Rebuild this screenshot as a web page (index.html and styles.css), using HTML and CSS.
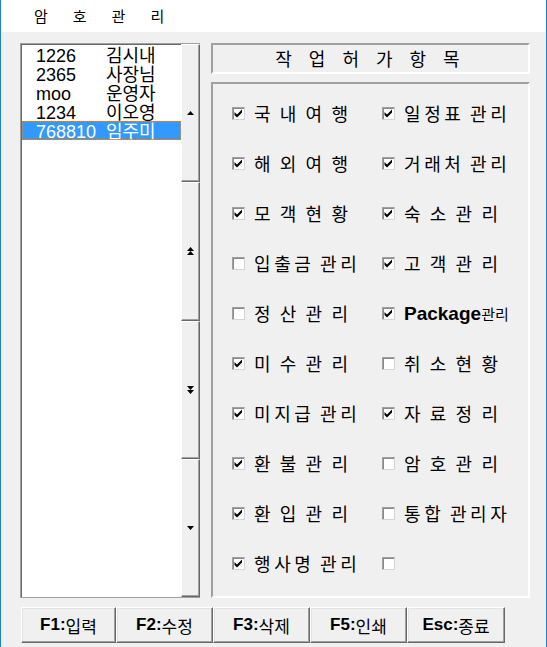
FILE: index.html
```html
<!DOCTYPE html>
<html lang="ko">
<head>
<meta charset="utf-8">
<title>암호관리</title>
<link rel="stylesheet" href="styles.css">
</head>
<body>
<div class="window">
  <div class="titlebar">암호관리</div>
  <div class="body">
    <div class="main">
      <div class="listbox">
        <div class="list">
          <div class="item"><span class="code">1226</span><span class="name">김시내</span></div>
          <div class="item"><span class="code">2365</span><span class="name">사장님</span></div>
          <div class="item"><span class="code">moo</span><span class="name">운영자</span></div>
          <div class="item"><span class="code">1234</span><span class="name">이오영</span></div>
          <div class="item selected"><span class="code">768810</span><span class="name">임주미</span></div>
        </div>
        <div class="scroll">
          <div class="sbtn"><svg width="7" height="4" viewBox="0 0 7 4"><polygon points="0,4 3.5,0 7,4" fill="#000"/></svg></div>
          <div class="sbtn"><svg width="7" height="8" viewBox="0 0 7 8"><polygon points="0,4 3.5,0 7,4" fill="#000"/><polygon points="0,8 3.5,4 7,8" fill="#000"/></svg></div>
          <div class="sbtn"><svg width="7" height="8" viewBox="0 0 7 8"><polygon points="0,0 3.5,4 7,0" fill="#000"/><polygon points="0,4 3.5,8 7,4" fill="#000"/></svg></div>
          <div class="sbtn"><svg width="7" height="4" viewBox="0 0 7 4"><polygon points="0,0 3.5,4 7,0" fill="#000"/></svg></div>
        </div>
      </div>
      <div class="right">
        <div class="header">작업허가항목</div>
        <div class="panel">
          <div class="grid">
            <div class="opt"><span class="cb on"></span><span class="lbl">국 내 여 행</span></div>
            <div class="opt"><span class="cb on"></span><span class="lbl cp">일정표 관리</span></div>
            <div class="opt"><span class="cb on"></span><span class="lbl">해 외 여 행</span></div>
            <div class="opt"><span class="cb on"></span><span class="lbl cp">거래처 관리</span></div>
            <div class="opt"><span class="cb on"></span><span class="lbl">모 객 현 황</span></div>
            <div class="opt"><span class="cb on"></span><span class="lbl">숙 소 관 리</span></div>
            <div class="opt"><span class="cb"></span><span class="lbl cp">입출금 관리</span></div>
            <div class="opt"><span class="cb on"></span><span class="lbl">고 객 관 리</span></div>
            <div class="opt"><span class="cb"></span><span class="lbl">정 산 관 리</span></div>
            <div class="opt"><span class="cb on"></span><span class="lbl"><b class="pkg">Package</b><span class="pkgk">관리</span></span></div>
            <div class="opt"><span class="cb on"></span><span class="lbl">미 수 관 리</span></div>
            <div class="opt"><span class="cb"></span><span class="lbl">취 소 현 황</span></div>
            <div class="opt"><span class="cb on"></span><span class="lbl cp">미지급 관리</span></div>
            <div class="opt"><span class="cb on"></span><span class="lbl">자 료 정 리</span></div>
            <div class="opt"><span class="cb on"></span><span class="lbl">환 불 관 리</span></div>
            <div class="opt"><span class="cb"></span><span class="lbl">암 호 관 리</span></div>
            <div class="opt"><span class="cb on"></span><span class="lbl">환 입 관 리</span></div>
            <div class="opt"><span class="cb"></span><span class="lbl cp">통합 관리자</span></div>
            <div class="opt"><span class="cb on"></span><span class="lbl cp">행사명 관리</span></div>
            <div class="opt"><span class="cb"></span><span class="lbl"></span></div>
          </div>
        </div>
      </div>
    </div>
    <div class="buttons">
      <div class="btn w95"><b>F1:</b>입력</div>
      <div class="btn w97"><b>F2:</b>수정</div>
      <div class="btn w97"><b>F3:</b>삭제</div>
      <div class="btn w97"><b>F5:</b>인쇄</div>
      <div class="btn w98"><b>Esc:</b>종료</div>
    </div>
  </div>
</div>
</body>
</html>
```
FILE: styles.css
```css
* { box-sizing: border-box; }
html, body { margin: 0; padding: 0; }
body {
  width: 547px;
  height: 647px;
  overflow: hidden;
  font-family: "Noto Sans CJK KR", "Liberation Sans", sans-serif;
  color: #000;
  background: #f0f0f0;
}
.window {
  width: 547px;
  height: 647px;
  border-left: 1px solid #1a82d6;
  border-right: 1px solid #1a82d6;
  background: #f0f0f0;
}
.titlebar {
  height: 32px;
  background: #fff;
  padding-left: 33px;
  font-size: 15px;
  line-height: 32px;
  letter-spacing: 25px;
}
.body {
  padding: 11px 0 0 19px;
}
.main {
  display: flex;
  gap: 11px;
  height: 555px;
}
.listbox {
  width: 180px;
  height: 555px;
  display: flex;
  border-top: 1px solid #a0a0a0;
  border-left: 1px solid #a0a0a0;
  border-bottom: 1px solid #a0a0a0;
}
.list {
  width: 160px;
  background: #fff;
  border-top: 1px solid #696969;
  border-left: 1px solid #696969;
}
.item {
  display: flex;
  height: 19px;
  line-height: 22px;
  padding-left: 14px;
  white-space: nowrap;
}
.code {
  width: 70px;
  font-family: "Liberation Sans", sans-serif;
  font-size: 18px;
}
.name {
  font-family: "Noto Sans CJK KR", sans-serif;
  font-size: 18px;
  line-height: 19px;
}
.item.selected {
  background: #3399ff;
  color: #fff;
  outline: 1px dotted #d88a3a;
  outline-offset: -1px;
}
.scroll {
  width: 19px;
  display: flex;
  flex-direction: column;
  background: #f0f0f0;
}
.sbtn {
  flex: 1;
  display: flex;
  align-items: center;
  justify-content: center;
  border-top: 1px solid #fff;
  border-left: 1px solid #fff;
  border-right: 1px solid #696969;
  border-bottom: 1px solid #696969;
  box-shadow: inset -1px -1px 0 #a0a0a0;
  padding-right: 1px;
}
.right {
  width: 319px;
  display: flex;
  flex-direction: column;
  gap: 8px;
}
.header {
  height: 31px;
  border: 2px solid;
  border-color: #a0a0a0 #fff #fff #a0a0a0;
  text-align: center;
  font-size: 18px;
  line-height: 27px;
  letter-spacing: 17px;
  padding-left: 11px;
}
.panel {
  height: 516px;
  border: 2px solid;
  border-color: #a0a0a0 #fff #fff #a0a0a0;
}
.grid {
  display: grid;
  grid-template-columns: 150px 150px;
  grid-auto-rows: 50px;
  padding: 4px 0 0 19px;
}
.opt {
  display: flex;
  align-items: center;
  white-space: nowrap;
}
.cb {
  width: 13px;
  height: 13px;
  flex: none;
  margin-right: 9px;
  background: #fff;
  border: 1px solid;
  border-color: #a0a0a0 #d4d4d4 #d4d4d4 #a0a0a0;
  box-shadow: inset 1px 1px 0 #8a8a8a;
}
.cb.on {
  background: #fff url("data:image/svg+xml,%3Csvg xmlns='http://www.w3.org/2000/svg' width='11' height='11' viewBox='0 0 11 11'%3E%3Cpath d='M1.5 4 L4 6.5 L9 1.5 L9 4.5 L4 9.5 L1.5 7 Z' fill='%23000'/%3E%3C/svg%3E") no-repeat 0 0;
}
.lbl {
  font-size: 18px;
  letter-spacing: 2.1px;
  line-height: 24px;
}
.lbl.cp {
  letter-spacing: 3.6px;
  word-spacing: -3px;
}
.pkg {
  font-family: "Liberation Sans", sans-serif;
  font-size: 19px;
  letter-spacing: 0;
}
.pkgk {
  font-size: 15px;
  letter-spacing: 0;
}
.buttons {
  display: flex;
  margin: 9px 0 0 1px;
}
.btn {
  height: 36px;
  display: flex;
  align-items: center;
  justify-content: center;
  font-size: 17px;
  border-top: 1px solid #fff;
  border-left: 1px solid #fff;
  border-right: 1px solid #696969;
  border-bottom: 1px solid #696969;
  box-shadow: inset -1px -1px 0 #a0a0a0, inset 1px 1px 0 #e3e3e3;
}
.btn b {
  font-family: "Liberation Sans", sans-serif;
  font-weight: bold;
}
.w95 { width: 95px; }
.w97 { width: 97px; }
.w98 { width: 98px; }
```
